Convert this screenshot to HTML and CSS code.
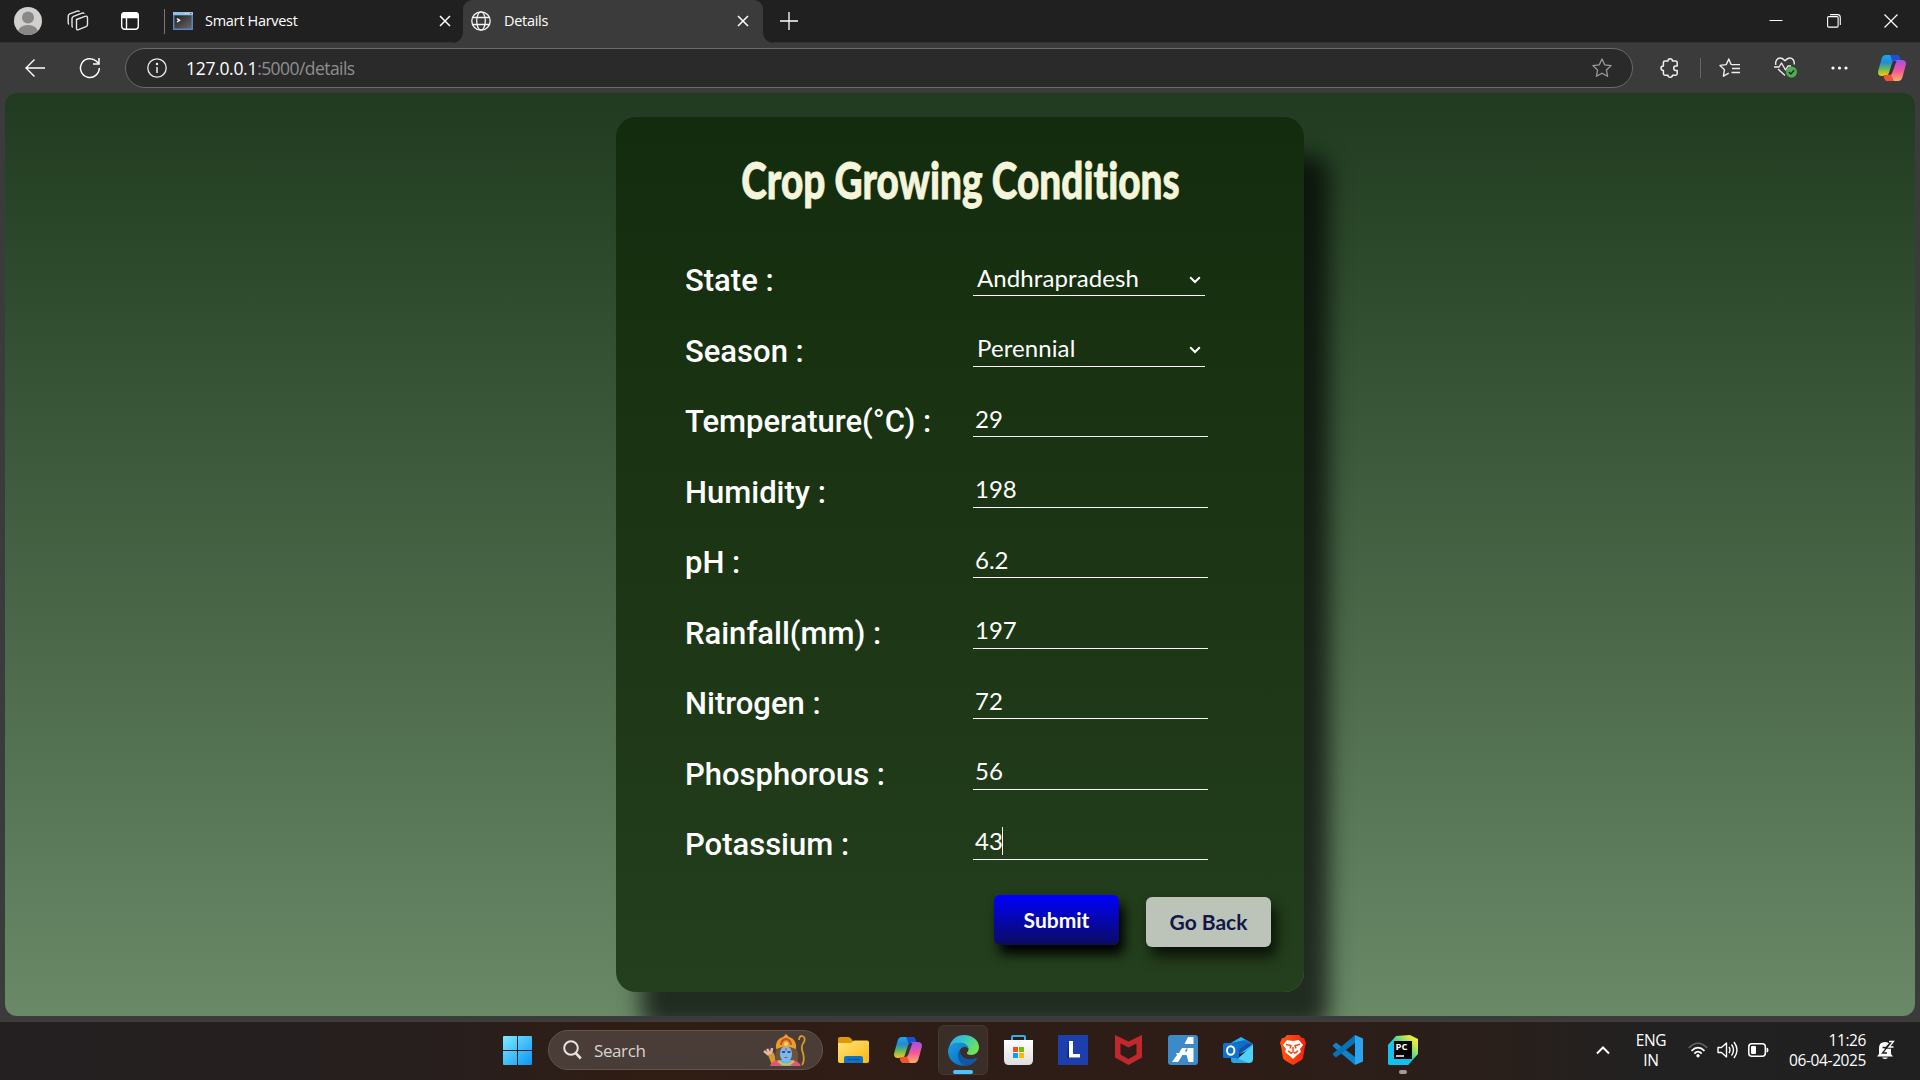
FILE: index.html
```html
<!DOCTYPE html>
<html lang="en">
<head>
<meta charset="utf-8">
<title>Details</title>
<link rel="stylesheet" href="styles.css">
</head>
<body>
<svg class="defs" width="0" height="0" aria-hidden="true">
  <defs>
    <linearGradient id="cpBlue" x1="0" y1="0" x2="0" y2="1"><stop offset="0" stop-color="#1ea7ec"/><stop offset=".35" stop-color="#2389d8"/><stop offset=".65" stop-color="#62b95c"/><stop offset="1" stop-color="#ffc80e"/></linearGradient>
    <linearGradient id="cpPink" x1="0" y1="0" x2="0" y2="1"><stop offset="0" stop-color="#a150ee"/><stop offset=".5" stop-color="#f2569a"/><stop offset="1" stop-color="#ffae62"/></linearGradient>
    <linearGradient id="win" x1="0" y1="0" x2="1" y2="1"><stop offset="0" stop-color="#7eeaff"/><stop offset="1" stop-color="#0a94f5"/></linearGradient>
    <linearGradient id="folder" x1="0" y1="0" x2="1" y2="1"><stop offset="0" stop-color="#ffe37a"/><stop offset="1" stop-color="#fbb812"/></linearGradient>
    <linearGradient id="edgeTop" x1="0" y1="0" x2="1" y2=".5"><stop offset="0" stop-color="#2fa7e4"/><stop offset=".5" stop-color="#35c6cb"/><stop offset="1" stop-color="#6fe454"/></linearGradient>
    <linearGradient id="edgeBody" x1="0" y1="0" x2="1" y2="1"><stop offset="0" stop-color="#1b9de2"/><stop offset="1" stop-color="#0b63b8"/></linearGradient>
    <linearGradient id="store" x1="0" y1="0" x2="0" y2="1"><stop offset="0" stop-color="#fff"/><stop offset="1" stop-color="#dedede"/></linearGradient>
    <linearGradient id="brave" x1="0" y1="0" x2="1" y2="0"><stop offset="0" stop-color="#ff5a10"/><stop offset="1" stop-color="#f8200c"/></linearGradient>
    <linearGradient id="pc" x1="0" y1="1" x2="1" y2="0"><stop offset="0" stop-color="#0fc4f2"/><stop offset=".5" stop-color="#2cd3b6"/><stop offset=".8" stop-color="#d9ea3a"/><stop offset="1" stop-color="#f8f33c"/></linearGradient>
    <linearGradient id="console" x1="0" y1="0" x2="1" y2="1"><stop offset="0" stop-color="#222"/><stop offset="1" stop-color="#666"/></linearGradient>
    <symbol id="copilot" viewBox="0 0 28 26">
      <path d="M8 0h10c2 0 3 1 3.600 3l1 3h-4c-2 0-3 1-3.600 3l-3 9c-.6 2-2 3-4 3H4c-3 0-4.500-2-3.800-5L3.500 4C4.300 1.500 5.500 0 8 0z" fill="url(#cpBlue)"/>
      <path d="M12 0h6c2 0 3 1 3.600 3l1 3h-4c-2 0-3 1-3.300 2z" fill="#1d4fd0"/>
      <path d="M20 26H10c-2 0-3-1-3.600-3l-1-3h3c2 0 3.200-1 3.800-3l3-9c.6-2 2-3 4-3H24c3 0 4.500 2 3.800 5L24.500 22c-.8 2.500-2 4-4.500 4z" fill="url(#cpPink)"/>
      <path d="M16 26h-6c-2 0-3-1-3.600-3l-1-3h3c2 0 3.200-1 3.800-2z" fill="#f0552f"/>
      <path d="M14 8.500c.7-2 1.600-2.500 3.500-2.500h1L14.500 17c-.6 2-1.500 3-3.500 3h-.8z" fill="#38322f"/>
    </symbol>
    <symbol id="x" viewBox="0 0 12 12"><path d="M1 1l10 10M11 1L1 11" fill="none" stroke="currentColor" stroke-width="1.500"/></symbol>
  </defs>
</svg>

<header class="tabstrip">
  <div class="strip-btn avatar-btn"><svg width="28" height="28" viewBox="0 0 28 28"><defs><clipPath id="av"><circle cx="14" cy="14" r="14"/></clipPath></defs><g clip-path="url(#av)"><rect width="28" height="28" fill="#d2d0ce"/><circle cx="14" cy="10.500" r="6" fill="#8a8886"/><ellipse cx="14" cy="25" rx="10" ry="7" fill="#8a8886"/></g></svg></div>
  <div class="strip-btn stack-btn"><svg width="22" height="22" viewBox="0 0 22 22" fill="none" stroke="#e6e6e6" stroke-width="1.400" stroke-linejoin="round"><path d="M9.500 9.500l8.500-3.200q2.500-.8 2.500 1.700v6.500q0 1.500-1.500 2.200l-7.500 3q-2 .8-2-1.500z"/><path d="M5.700 17.500q-.7-.5-.7-2V8.500q0-1.500 1.500-2.200l8.500-3.200q1.600-.5 2.200.7"/><path d="M2 14.500q-.8-.5-.8-2V6q0-1.500 1.500-2.200l7.500-2.700q1.600-.5 2.200.7"/></svg></div>
  <div class="strip-btn pane-btn"><svg width="18" height="18" viewBox="0 0 18 18" fill="none" stroke="#fff" stroke-width="1.400"><rect x=".7" y=".7" width="16.600" height="16.600" rx="3"/><path d="M1 3q0-2 2-2h12q2 0 2 2v2.500H1z" fill="#fff"/><path d="M5.500 5v12"/></svg></div>
  <div class="strip-sep"></div>
  <div class="tab">
    <svg width="20" height="18" viewBox="0 0 20 18"><rect width="20" height="18" fill="#5b83bd"/><rect y="0" width="20" height="3" fill="#8fc0ee"/><path d="M12 1.500h1M14.500 1.500h1" stroke="#fff"/><path d="M17 1.500h1.500" stroke="#d44"/><rect x="1.500" y="3.500" width="17" height="13" fill="url(#console)"/><path d="M4 6.500l2.500 1.800L4 10" fill="none" stroke="#fff" stroke-width="1.500"/></svg>
    <span class="tab-title">Smart Harvest</span>
    <svg class="tab-x" width="12" height="12"><use href="#x"/></svg>
  </div>
  <div class="tab tab-active">
    <svg width="20" height="20" viewBox="0 0 20 20" fill="none" stroke="#f4f4f4" stroke-width="1.300"><circle cx="10" cy="10" r="9.200"/><ellipse cx="10" cy="10" rx="4.300" ry="9.200"/><path d="M1.800 6.500h16.400M1.800 13.500h16.400"/></svg>
    <span class="tab-title tab-title-active">Details</span>
    <svg class="tab-x" width="12" height="12"><use href="#x"/></svg>
  </div>
  <svg class="new-tab" width="18" height="18" viewBox="0 0 18 18"><path d="M9 0v18M0 9h18" stroke="#fff" stroke-width="1.300"/></svg>
  <div class="win-controls">
    <div class="win-btn"><svg width="14" height="14" viewBox="0 0 14 14"><path d="M.5 6.500h13" stroke="#fff"/></svg></div>
    <div class="win-btn"><svg width="14" height="14" viewBox="0 0 14 14" fill="none" stroke="#fff" stroke-width="1.100"><rect x=".6" y="2.600" width="10.500" height="10.500" rx="1"/><path d="M3 .6h7.500q2.800 0 2.800 2.800V11"/></svg></div>
    <div class="win-btn"><svg width="14" height="14" viewBox="0 0 14 14"><path d="M.5 .5l13 13M13.500 .5l-13 13" stroke="#fff" stroke-width="1.200"/></svg></div>
  </div>
</header>

<nav class="toolbar">
  <div class="nav-btn back"><svg width="20" height="18" viewBox="0 0 20 18" fill="none" stroke="#fff" stroke-width="1.400"><path d="M20 9H1M9.500 .5L1 9l8.500 8.500"/></svg></div>
  <div class="nav-btn reload"><svg width="22" height="22" viewBox="0 0 22 22" fill="none" stroke="#fff" stroke-width="1.500"><path d="M20.300 11a9.400 9.400 0 1 1-3.200-7l2.800 2.600"/><path d="M20 1v6h-6"/></svg></div>
  <div class="address">
    <svg width="20" height="20" viewBox="0 0 20 20" fill="none" stroke="#eee" stroke-width="1.300"><circle cx="10" cy="10" r="9.200"/><path d="M10 9v6" stroke-width="1.500"/><circle cx="10" cy="6" r=".6" fill="#eee"/></svg>
    <span class="url"><span class="url-host">127.0.0.1</span>:5000/details</span>
    <svg class="star" width="20" height="20" viewBox="0 0 20 20" fill="none" stroke="#9b9b9b" stroke-width="1.300" stroke-linejoin="round"><path d="M10 1l2.700 5.800 6.400.8-4.700 4.400 1.200 6.300L10 15.200l-5.600 3.100L5.600 12 .9 7.600l6.400-.8z"/></svg>
  </div>
  <div class="tool ext"><svg width="20" height="20" viewBox="0 0 20 20" fill="none" stroke="#eee" stroke-width="1.500" stroke-linejoin="round"><path d="M5 3h3q0-2.200 2.200-2.200T12.400 3h3.200q1.600 0 1.600 1.600V8h-1.500q-2 .2-2 2.200t2 2.200h1.500v3.200q0 1.600-1.600 1.600h-3.200q0 2-2.200 2T8 17.200H5q-1.600 0-1.600-1.600v-3.200Q1 12.200 1 10.200T3.400 8V4.600Q3.400 3 5 3z"/></svg></div>
  <div class="tool-sep"></div>
  <div class="tool"><svg width="21" height="20" viewBox="0 0 21 20" fill="none" stroke="#eee" stroke-width="1.400" stroke-linejoin="round"><path d="M14.500 6.700l-2.400-.3L9.800 1 7.200 6.600 1 7.400l4.500 4.300-1.100 6.500 5.400-3M13 10.500h8M12.500 14.500H21M14.500 6.600H21" /></svg></div>
  <div class="tool heart"><svg width="24" height="21" viewBox="0 0 24 21" fill="none" stroke="#eee" stroke-width="1.400" stroke-linejoin="round"><path d="M1.800 8C1 3.500 3.500 1 6.300 1c2 0 3.200 1 4.700 2.800C12.500 2 13.700 1 15.700 1c2.800 0 5 2.500 4.500 6.500M4 12l7 6.500M0 10h5l2.500-4 4 7 2.500-4H17"/><circle cx="17.500" cy="15" r="5.500" fill="#4caf50" stroke="none"/><path d="M14.800 15l2 2 3.400-3.800" stroke="#222"/></svg></div>
  <div class="tool dots"><svg width="17" height="4" viewBox="0 0 17 4" fill="#fff"><circle cx="2" cy="2" r="1.600"/><circle cx="8.500" cy="2" r="1.600"/><circle cx="15" cy="2" r="1.600"/></svg></div>
  <div class="tool cop"><svg width="28" height="26"><use href="#copilot"/></svg></div>
</nav>

<main class="viewport">
  <form class="card">
    <h1 class="title"><span class="title-text">Crop Growing Conditions</span></h1>
    <div class="fields">
      <div class="row"><label class="label">State :</label><div class="field select"><span class="value">Andhrapradesh</span><svg class="chev" width="12" height="8" viewBox="0 0 12 8"><path d="M1.200 1.200L6 6l4.800-4.800" fill="none" stroke="#fff" stroke-width="2"/></svg></div></div>
      <div class="row"><label class="label">Season :</label><div class="field select"><span class="value">Perennial</span><svg class="chev" width="12" height="8" viewBox="0 0 12 8"><path d="M1.200 1.200L6 6l4.800-4.800" fill="none" stroke="#fff" stroke-width="2"/></svg></div></div>
      <div class="row"><label class="label">Temperature(°C) :</label><div class="field"><span class="value">29</span></div></div>
      <div class="row"><label class="label">Humidity :</label><div class="field"><span class="value">198</span></div></div>
      <div class="row"><label class="label">pH :</label><div class="field"><span class="value">6.2</span></div></div>
      <div class="row"><label class="label">Rainfall(mm) :</label><div class="field"><span class="value">197</span></div></div>
      <div class="row"><label class="label">Nitrogen :</label><div class="field"><span class="value">72</span></div></div>
      <div class="row"><label class="label">Phosphorous :</label><div class="field"><span class="value">56</span></div></div>
      <div class="row"><label class="label">Potassium :</label><div class="field"><span class="value">43</span><span class="caret"></span></div></div>
    </div>
    <div class="actions">
      <div class="btn submit">Submit</div>
      <div class="btn goback">Go Back</div>
    </div>
  </form>
</main>

<footer class="taskbar">
  <svg class="start" width="29" height="29" viewBox="0 0 29 29" fill="url(#win)"><path d="M1 0h13v14H0V1q0-1 1-1zM15 0h13q1 0 1 1v13H15zM0 15h14v14H1q-1 0-1-1zM15 15h14v13q0 1-1 1H15z"/></svg>
  <div class="search">
    <svg width="19" height="20" viewBox="0 0 19 20" fill="none" stroke="#e8e4e2" stroke-width="2"><circle cx="8" cy="8" r="6.800"/><path d="M12.800 13.200l5 5.300" stroke-width="2.600"/></svg>
    <span class="search-text">Search</span>
    <svg class="rama" width="44" height="32" viewBox="0 0 44 32">
      <path d="M36 6q0-4 3-4 4 1 2 6-4 5-1 11 2 8-1 12" fill="none" stroke="#d89a22" stroke-width="1.800"/>
      <path d="M1 17l5 4M4 15l4 6M9 14l-1 7" stroke="#e6b9a0" stroke-width="2.500"/><path d="M5 21l6-2 3 12H9z" fill="#d79b2a"/>
      <path d="M14 14q-3 8-1 15h21q3-8-1-15z" fill="#6e533a"/>
      <path d="M7 32q1-5 9-6h13q7 1 9 6z" fill="#e0567a"/><path d="M16 26h14l-2 6H18z" fill="#58b7e8"/>
      <ellipse cx="23" cy="20" rx="6" ry="8" fill="#79b8f4"/>
      <path d="M13 15Q12 5 20 3l3-3 3 3q8 2 7 12-10-4-20 0z" fill="#e3a127"/>
      <path d="M18 11q0-5 5-6 5 1 5 6" fill="none" stroke="#d3452f" stroke-width="2"/><circle cx="23" cy="10" r="2" fill="#f8d977"/>
      <path d="M19 18h3M24.500 18h3" stroke="#23304c" stroke-width="1.500"/><path d="M23 14v3" stroke="#d33"/><path d="M21.500 23.500h3" stroke="#b33d54"/>
      <path d="M15 27q8 7 16 0" fill="none" stroke="#f1b62b" stroke-width="2"/>
    </svg>
  </div>
  <div class="apps">
    <div class="app"><svg width="31" height="28" viewBox="0 0 31 28"><path d="M0 3q0-2 2-2h8q2 0 3.500 2L15 5v6H0z" fill="#dd9a05"/><path d="M0 7h13l3-2.500h13q2 0 2 2V25q0 2-2 2H2q-2 0-2-2z" fill="url(#folder)"/><path d="M6 27v-5q0-2 2-2h15q2 0 2 2v5z" fill="#0f73c4"/><path d="M9.500 23.500h12" stroke="#0a4f92" stroke-width="1.300"/></svg></div>
    <div class="app"><svg width="28" height="26"><use href="#copilot"/></svg></div>
    <div class="app app-active"><svg width="31" height="31" viewBox="0 0 31 31"><path d="M1 13C2.500 4.500 9 0 16 0c9 0 15 6 15 12 0 5-3.500 8-8 8-3 0-4.500-1-4-2.500 1-1 1.500-2 1.500-3.500 0-3-4-6-8.500-6C7 8 3 10 1 13z" fill="url(#edgeTop)"/><path d="M0 16c0-5 5-8.500 11-8.500 5.500 0 9.500 3 9.500 6.500-1.500-2-4-2.500-6-1.500-3.500 1.700-4 6-2.500 9.500 2 5 6.500 7.500 12 7C13 34 0 28 0 16z" fill="url(#edgeBody)"/><path d="M12 14.500c-3.500 4-2.500 12 3.500 15.500 5 1 10.500-1 13.500-6 .5-1-.5-1.300-1.200-1C19 26.500 11.500 22 12 14.500z" fill="#1257a5"/></svg><span class="mark mark-active"></span></div>
    <div class="app"><svg width="29" height="31" viewBox="0 0 29 31"><path d="M8 7V2q0-1 1-1h11q1 0 1 1v5" fill="none" stroke="#2bb3ea" stroke-width="2"/><path d="M0 5h29v20q0 5-5 5H5q-5 0-5-5z" fill="url(#store)"/><path d="M9 12h5v5H9z" fill="#f25022"/><path d="M15 12h5v5h-5z" fill="#7fba00"/><path d="M9 18h5v5H9z" fill="#00a4ef"/><path d="M15 18h5v5h-5z" fill="#ffb900"/></svg></div>
    <div class="app"><svg width="30" height="30" viewBox="0 0 30 30"><path d="M0 0h30v30H0z" fill="#1d3fae"/><path d="M11 6l-2 17h12l1-3H13z" fill="#12296f"/><path d="M11 6h4v13h7v3.500H11z" fill="#fff"/></svg></div>
    <div class="app"><svg width="27" height="30" viewBox="0 0 27 30"><path d="M0 0l13.500 6.500L27 0v22.500L13.500 30 0 22.500zM5.500 8.500v11l8 4.500 8-4.500v-11l-8 4z" fill="#c0282d" fill-rule="evenodd"/></svg></div>
    <div class="app"><svg width="30" height="30" viewBox="0 0 30 30"><rect width="30" height="30" rx="3" fill="#3b8bcb"/><path d="M20 2h5.500v7H16.500zM14 13h5L10 27H4l5-7-1-2h3zM19.500 13h6v14h-5l-2-7h-5l2.500-3.500h3z" fill="#fff"/></svg></div>
    <div class="app"><svg width="31" height="27" viewBox="0 0 31 27"><path d="M6 7L18 0l12 7v5L8 20z" fill="#2fb1ee"/><path d="M8 6l14-3 7 4-14 11z" fill="#0f6fc8"/><path d="M30 8v14q0 4-4 4H10z" fill="#4ed2f8"/><path d="M30 7L12 20l-2-3L25 6z" fill="#1350a8"/><path d="M8 19l18 7H11q-3 0-3-3z" fill="#27a4e6"/><rect y="6" width="16" height="15" rx="1.500" fill="#0f72d2"/><ellipse cx="7.700" cy="13.500" rx="3.700" ry="4.200" fill="none" stroke="#fff" stroke-width="2"/></svg></div>
    <div class="app"><svg width="26" height="30" viewBox="0 0 26 30"><path d="M7 0h12l3 3h2l2 5-1 3-2 12q-1 2-3 3l-7 4-7-4q-2-1-3-3L1 11 0 8l2-5h2z" fill="url(#brave)"/><path d="M7 5l6 1 6-1 4 5-3 4 1 3-5 4-3 3-3-3-5-4 1-3-3-4z" fill="#fff"/><path d="M6 9.500l5 1-1 3M20 9.500l-5 1 1 3M8 16l4 2.500M18 16l-4 2.500M13 12v6" stroke="#fb4410" stroke-width="1.500" fill="none"/></svg></div>
    <div class="app"><svg width="30" height="30" viewBox="0 0 30 30"><path d="M22 0l8 3.500v23L22 30z" fill="#29a5f2"/><path d="M0 10l3-2.500L22 22v8L0 11.500z" fill="#0d84cb"/><path d="M0 20l3 2.500L22 8V0L0 18.500z" fill="#0a70b8"/></svg></div>
    <div class="app"><svg width="30" height="30" viewBox="0 0 30 30"><path d="M8 1l14-1 8 4v15L20 30H2q-2 0-2-2V10z" fill="url(#pc)"/><path d="M0 12v16q0 2 2 2h18l5-6H6V6z" fill="#10c3ee"/><rect x="6" y="6" width="18" height="18"/><path d="M8 21h8" stroke="#fff" stroke-width="1.500"/><text x="7.500" y="15" class="pc-text">PC</text></svg><span class="mark"></span></div>
  </div>
  <div class="tray">
    <svg class="tray-chev" width="14" height="9" viewBox="0 0 14 9"><path d="M1 7.500l6-6 6 6" fill="none" stroke="#fff" stroke-width="2"/></svg>
    <div class="lang"><span>ENG</span><span>IN</span></div>
    <svg class="wifi" width="20" height="16" viewBox="0 0 20 16" fill="none" stroke="#fff" stroke-width="1.700"><path d="M.8 6q9.200-9.500 18.400 0" stroke="#666"/><path d="M3.500 8.800q6.500-6.500 13 0M6.300 11.600q3.700-3.800 7.400 0"/><circle cx="10" cy="13.800" r="1.300" fill="#fff" stroke-width=".8"/></svg>
    <svg class="vol" width="21" height="18" viewBox="0 0 21 18" fill="none" stroke="#fff" stroke-width="1.400" stroke-linejoin="round"><path d="M1 6.500h3.500L9.500 2v14l-5-4.500H1zM12 6q2 3 0 6M14.500 3.500q4 5.500 0 11M17 1q6 8 0 16"/></svg>
    <svg class="batt" width="21" height="14" viewBox="0 0 21 14"><rect x=".8" y=".8" width="16.500" height="12.400" rx="3" fill="none" stroke="#fff" stroke-width="1.500"/><rect x="3" y="3" width="5" height="8" rx="1" fill="#fff"/><path d="M18.500 4.500q2 0 2 2.500t-2 2.500z" fill="#fff"/></svg>
    <div class="clock"><span>11:26</span><span>06-04-2025</span></div>
    <svg class="bell" width="18" height="20" viewBox="0 0 18 20"><path d="M2 14V8q0-6 6-6t6 6v6l2 2.500H0zM5 17.500h6q-3 3-6 0z" fill="#fff"/><path d="M5.500 7.500h4.500l-4.500 5.500H10" fill="none" stroke="#222" stroke-width="1.300"/><path d="M11 1h5l-5 6h5" fill="none" stroke="#222" stroke-width="3.500"/><path d="M12 1.500h4.500L12 7h4.500" fill="none" stroke="#fff" stroke-width="1.300"/></svg>
  </div>
</footer>
</body>
</html>
```
FILE: styles.css
```css
* { box-sizing: border-box; }
body {
  margin: 0;
  width: 1920px;
  height: 1080px;
  overflow: hidden;
  display: flex;
  flex-direction: column;
  background: #3b3b3b;
  color: #fff;
  font-family: "Open Sans", "Noto Sans", sans-serif;
}
svg { display: block; flex: none; }
.defs { position: absolute; }

/* Tab strip */
.tabstrip {
  height: 43px;
  flex: none;
  display: flex;
  align-items: center;
  background: #202020;
  border-bottom: 1px solid #333;
}
.strip-btn { display: flex; justify-content: center; flex: none; }
.avatar-btn { width: 56px; }
.stack-btn { width: 43px; }
.pane-btn { width: 62px; }
.strip-sep { width: 1px; height: 25px; margin: 0 0 0 3px; background: #777; }
.tab {
  width: 298px;
  height: 43px;
  display: flex;
  align-items: center;
  padding: 0 12px 0 8px;
}
.tab-title {
  flex: 1;
  margin-left: 12px;
  padding-bottom: 1px;
  font-size: 14.500px;
  letter-spacing: -0.300px;
}
.tab-title-active { margin-left: 13px; }
.tab-active {
  position: relative;
  width: 300px;
  padding-right: 14px;
  background: #3b3b3b;
  border-radius: 9px 9px 0 0;
}
.tab-active::before,
.tab-active::after {
  content: "";
  position: absolute;
  bottom: 0;
  width: 10px;
  height: 10px;
}
.tab-active::before { left: -10px; background: radial-gradient(circle at 0 0, #202020 9.500px, #3b3b3b 10px); }
.tab-active::after { right: -10px; background: radial-gradient(circle at 100% 0, #202020 9.500px, #3b3b3b 10px); }
.new-tab { margin-left: 17px; }
.win-controls { display: flex; margin-left: auto; }
.win-btn { width: 57.500px; display: flex; justify-content: center; }

/* Toolbar */
.toolbar { height: 50px; flex: none; display: flex; align-items: center; padding-bottom: 1px; }
.nav-btn { display: flex; justify-content: center; }
.back { width: 70px; }
.reload { width: 40px; }
.address {
  width: 1508px;
  height: 40px;
  margin-left: 15px;
  padding: 0 20px 0 21px;
  display: flex;
  align-items: center;
  background: #2a2a2a;
  border: 1px solid #6a6a6a;
  border-radius: 20px;
}
.url { margin-left: 19px; font-size: 17.500px; color: #8f8f8f; letter-spacing: -0.560px; }
.url-host { color: #fff; letter-spacing: -0.300px; }
.star { margin-left: auto; }
.tool { display: flex; justify-content: center; }
.ext { margin-left: 19px; width: 36px; }
.tool-sep { width: 1px; height: 20px; margin: 0 18px 0 12px; background: #666; }
.heart { margin-left: 34px; }
.dots { margin-left: 33px; }
.cop { margin-left: 30px; }

/* Page */
.viewport {
  height: 923px;
  flex: none;
  margin: 0 5px;
  padding-top: 24px;
  display: flex;
  justify-content: center;
  align-items: flex-start;
  overflow: hidden;
  border-radius: 12px;
  background: linear-gradient(#203b1f, #698967);
}
.card {
  width: 688px;
  height: 875px;
  padding: 28px 33px 0 69px;
  border-radius: 20px;
  background: linear-gradient(#132c0d, #243f1d);
  box-shadow: 25px 38px 22px rgba(0, 0, 0, 0.680);
}
.title {
  margin: 0 0 0 -36px;
  height: 70px;
  display: flex;
  justify-content: center;
  align-items: center;
  font-family: Lato, sans-serif;
  font-weight: 900;
  font-size: 51px;
  font-variant-ligatures: none;
  line-height: 70px;
  color: #f5f5dc;
  white-space: nowrap;
}
.title-text { transform: scaleX(0.760); -webkit-text-stroke: 0.800px #f5f5dc; }
.fields { display: flex; flex-direction: column; margin-top: 11px; }
.row { height: 70.450px; display: flex; align-items: flex-end; }
.label {
  width: 288px;
  padding-top: 1px;
  font-family: Roboto, sans-serif;
  font-weight: 500;
  font-size: 31px;
  line-height: 31px;
}
.field {
  width: 235px;
  height: 38px;
  padding: 2px 0 0 2px;
  display: flex;
  align-items: center;
  border-bottom: 1px solid #fff;
  font-family: Lato, sans-serif;
  font-size: 24px;
  line-height: 34px;
}
.select { width: 232px; padding: 2px 4px 0; letter-spacing: 0.100px; }
.chev { margin: 4px 0 0 auto; }
.caret { width: 1px; height: 28px; margin-left: -1px; background: #fff; }
.actions { display: flex; justify-content: flex-end; margin-top: 35px; gap: 27px; }
.btn {
  width: 125px;
  height: 50px;
  border-radius: 6px;
  text-align: center;
  font-family: Lato, sans-serif;
  font-weight: 700;
  font-size: 21px;
  line-height: 50px;
}
.submit { background: linear-gradient(#0000ff, #0c0c60); box-shadow: 5px 9px 12px #000; }
.goback { margin-top: 2px; background: #bcc4b9; color: #131747; box-shadow: 5px 9px 14px rgba(0, 0, 0, 0.750); }

/* Taskbar */
.taskbar {
  height: 59px;
  flex: none;
  margin-top: 5px;
  padding: 0 0 2px 503px;
  display: flex;
  align-items: center;
  border-top: 1px solid #443c38;
  background: linear-gradient(90deg, #242021 0, #271f1e 430px, #301d14 640px, #2e1d17 1000px, #2e1d17 1250px, #291f1b 1500px, #222121 1640px, #202020);
}
.search {
  width: 275px;
  height: 40px;
  margin-left: 16px;
  padding: 0 15px 0 14px;
  display: flex;
  align-items: center;
  border: 1px solid #62534c;
  border-radius: 20px;
  background: #4a3c36;
}
.search-text { margin-left: 12px; font-size: 17px; letter-spacing: -0.400px; color: #d9d4d1; }
.rama { margin-left: auto; }
.apps { display: flex; gap: 5px; margin-left: 5px; }
.app {
  position: relative;
  width: 50px;
  height: 50px;
  display: flex;
  align-items: center;
  justify-content: center;
}
.app-active { background: #3b2d28; border: 1px solid #46382f; border-radius: 6px; }
.mark {
  position: absolute;
  left: 50%;
  bottom: 1px;
  width: 8px;
  height: 4px;
  margin-left: -4px;
  border-radius: 2px;
  background: #a39c98;
}
.mark-active { width: 20px; margin-left: -10px; bottom: 0; background: #4cc2ff; }
.pc-text { font: 700 9.500px "Open Sans", sans-serif; fill: #fff; }
.tray { display: flex; align-items: center; margin-left: auto; padding-right: 25px; }
.lang { width: 60px; display: flex; flex-direction: column; align-items: center; margin-left: 11px; font-size: 15.500px; line-height: 20px; letter-spacing: -0.300px; }
.wifi { margin-left: 7px; }
.vol { margin-left: 9px; }
.batt { margin-left: 10px; }
.clock { width: 88px; display: flex; flex-direction: column; align-items: flex-end; margin-left: 9px; font-size: 15.500px; line-height: 20px; letter-spacing: -0.400px; white-space: nowrap; }
.bell { margin-left: 11px; }
```
